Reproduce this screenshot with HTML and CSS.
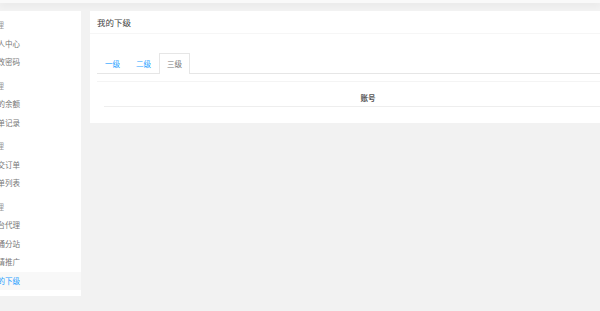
FILE: index.html
```html
<!DOCTYPE html>
<html lang="zh-CN">
<head>
  <meta charset="UTF-8">
  <meta name="viewport" content="width=device-width, initial-scale=1.0">
  <title>我的下级</title>
  <link rel="stylesheet" href="styles.css">
</head>
<body>
  <div class="topbar"></div>
  <div class="page">
    <div class="sidebar">
      <div class="group">账户管理</div>
      <a class="item">个人中心</a>
      <a class="item">修改密码</a>
      <div class="group">资金管理</div>
      <a class="item">我的余额</a>
      <a class="item">账单记录</a>
      <div class="group">订单管理</div>
      <a class="item">提交订单</a>
      <a class="item">订单列表</a>
      <div class="group">代理管理</div>
      <a class="item">平台代理</a>
      <a class="item">开通分站</a>
      <a class="item">邀请推广</a>
      <a class="item active">我的下级</a>
    </div>

    <div class="card">
      <div class="card-header">我的下级</div>
      <div class="card-body">
        <ul class="tabs">
          <li>一级</li>
          <li>二级</li>
          <li class="current">三级</li>
        </ul>
        <div class="tab-content">
          <table class="list">
            <thead>
              <tr><th>账号</th></tr>
            </thead>
          </table>
        </div>
      </div>
    </div>
  </div>
</body>
</html>
```

FILE: styles.css
```css
html, body {
  margin: 0;
  padding: 0;
  overflow: hidden;
}
body {
  font-family: "Noto Sans CJK SC", "Noto Sans", sans-serif;
  background-color: #f2f2f2;
  color: #666;
}
.topbar {
  height: 3px;
  background: #f9f9f9;
  box-shadow: 0 2px 6px rgba(0, 0, 0, 0.07);
}
.page {
  display: flex;
  align-items: flex-start;
  gap: 9px;
  width: 680px;
  margin-left: -34px;
  padding-top: 8px;
}
.sidebar {
  width: 115px;
  flex-shrink: 0;
  background: white;
  padding-bottom: 6px;
}
.group {
  height: 23.5px;
  box-sizing: border-box;
  padding: 4px 0 0 8px;
  line-height: 19px;
  font-size: 7.5px;
  color: #999;
}
.item {
  display: block;
  height: 18.5px;
  line-height: 18.5px;
  padding-left: 24px;
  font-size: 7.5px;
  color: #777;
}
.item.active {
  background: #f8f8f8;
  color: #1E9FFF;
}
.card {
  flex: 1;
  background: white;
}
.card-header {
  height: 22px;
  line-height: 22px;
  padding: 0 7px;
  font-size: 8.5px;
  color: #444;
  border-bottom: 1px solid #f6f6f6;
}
.card-body {
  padding: 19px 7px 16px;
}
.tabs {
  display: flex;
  margin: 0;
  padding: 0;
  list-style: none;
  height: 20px;
  border-bottom: 1px solid #e6e6e6;
}
.tabs li {
  width: 31px;
  box-sizing: border-box;
  text-align: center;
  line-height: 19px;
  font-size: 7.5px;
  color: #1E9FFF;
  border: 1px solid transparent;
  border-bottom: none;
}
.tabs li.current {
  background: white;
  color: #777;
  border-color: #e6e6e6;
  height: 21px;
}
.tab-content {
  margin-top: 7px;
  border-top: 1px solid #f4f4f4;
}
.list {
  width: 528px;
  margin-left: 7px;
  border-collapse: collapse;
}
.list th {
  height: 18px;
  padding: 6px 0 0;
  font-size: 7.5px;
  font-weight: bold;
  color: #555;
  border-bottom: 1px solid #eee;
}
```
